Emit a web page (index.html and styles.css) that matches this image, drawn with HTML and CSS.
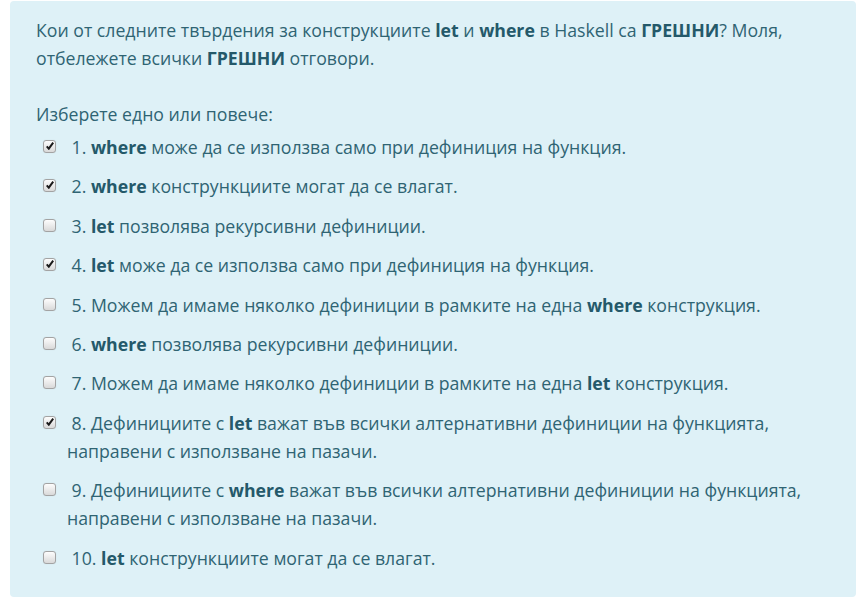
FILE: index.html
```html
<!DOCTYPE html>
<html>
<head>
<meta charset="utf-8">
<link rel="stylesheet" href="styles.css">
</head>
<body>
<div class="formulation">
  <p class="qtext">Кои от следните твърдения за конструкциите <b>let</b> и <b>where</b> в Haskell са <b>ГРЕШНИ</b>? Моля, отбележете всички <b>ГРЕШНИ</b> отговори.</p>
  <div class="prompt">Изберете едно или повече:</div>
  <div class="answers">
    <div class="opt"><span class="cb on"></span><span class="lbl">&nbsp;1. <b>where</b> може да се използва само при дефиниция на функция.</span></div>
    <div class="opt"><span class="cb on"></span><span class="lbl">&nbsp;2. <b>where</b> констрункциите могат да се влагат.</span></div>
    <div class="opt"><span class="cb"></span><span class="lbl">&nbsp;3. <b>let</b> позволява рекурсивни дефиниции.</span></div>
    <div class="opt"><span class="cb on"></span><span class="lbl">&nbsp;4. <b>let</b> може да се използва само при дефиниция на функция.</span></div>
    <div class="opt"><span class="cb"></span><span class="lbl">&nbsp;5. Можем да имаме няколко дефиниции в рамките на една <b>where</b> конструкция.</span></div>
    <div class="opt"><span class="cb"></span><span class="lbl">&nbsp;6. <b>where</b> позволява рекурсивни дефиниции.</span></div>
    <div class="opt"><span class="cb"></span><span class="lbl">&nbsp;7. Можем да имаме няколко дефиниции в рамките на една <b>let</b> конструкция.</span></div>
    <div class="opt"><span class="cb on"></span><span class="lbl">&nbsp;8. Дефинициите с <b>let</b> важат във всички алтернативни дефиниции на функцията, направени с използване на пазачи.</span></div>
    <div class="opt"><span class="cb"></span><span class="lbl">&nbsp;9. Дефинициите с <b>where</b> важат във всички алтернативни дефиниции на функцията, направени с използване на пазачи.</span></div>
    <div class="opt"><span class="cb"></span><span class="lbl">&nbsp;10. <b>let</b> констрункциите могат да се влагат.</span></div>
  </div>
</div>
</body>
</html>
```
FILE: styles.css
```css
html, body {
  margin: 0;
  padding: 0;
  background: #ffffff;
}
body {
  padding: 1px 10px 0 10px;
  font-family: "Open Sans", "Noto Sans", sans-serif;
  font-size: 17.7px;
  line-height: 28px;
  color: #2f6473;
}
.formulation {
  background: #def1f7;
  border-radius: 4px;
  padding: 15px 26px 26px 26px;
  height: 596px;
  box-sizing: border-box;
}
b {
  font-weight: 700;
  color: #24596a;
}
.qtext {
  margin: 0 0 28px 0;
}
.prompt {
  margin: 0;
}
.answers {
  padding-left: 7px;
  margin-top: 5px;
}
.opt {
  display: flex;
  align-items: flex-start;
  padding: 0 0 11.4px 0;
}
.cb {
  flex: none;
  width: 13px;
  height: 13px;
  box-sizing: border-box;
  margin-top: 7px;
  margin-right: 11px;
  border: 1px solid #a3a3a3;
  border-radius: 3px;
  background: linear-gradient(#fdfdfd, #d9d9d9);
  box-shadow: 0 0 1px rgba(0,0,0,0.15);
  position: relative;
}
.cb.on::after {
  content: "";
  position: absolute;
  left: 2px;
  top: 1px;
  width: 8px;
  height: 8px;
  background: no-repeat center/contain url("data:image/svg+xml,%3Csvg xmlns='http://www.w3.org/2000/svg' viewBox='0 0 8 8'%3E%3Cpath d='M0.7 4.4 L2.8 6.7 L7.2 0.7' fill='none' stroke='%231a1a1a' stroke-width='2'/%3E%3C/svg%3E");
}
.lbl {
  flex: 1;
}
```
